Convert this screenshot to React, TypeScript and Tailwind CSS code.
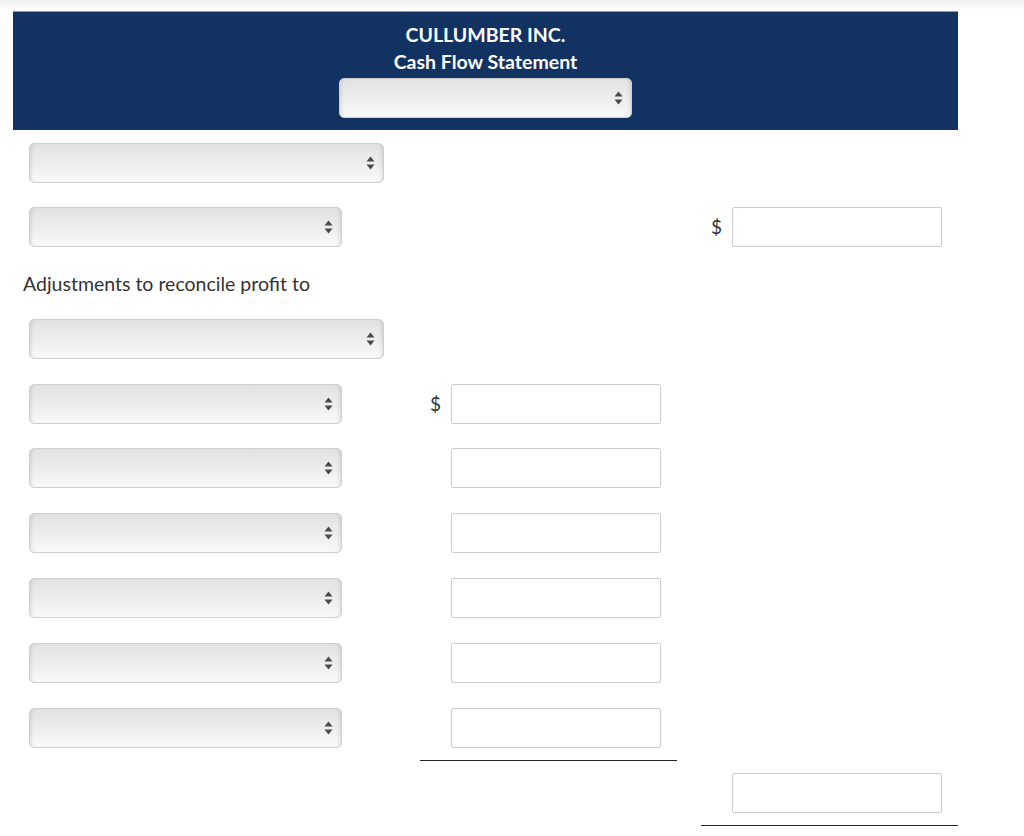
import React from "react";

const font = { fontFamily: "Lato, 'Noto Sans', sans-serif" };

function Arrows() {
  return (
    <svg width="9" height="14" viewBox="0 0 9 14" className="shrink-0">
      <path d="M4.5 0.5 L8.5 5.5 L0.5 5.5 Z" fill="#4a4a4a" />
      <path d="M4.5 13.5 L8.5 8.5 L0.5 8.5 Z" fill="#4a4a4a" />
    </svg>
  );
}

function Select({ w }: { w: string }) {
  return (
    <div
      className={`${w} h-[40px] flex items-center justify-end pr-[8px] rounded-[5px] border border-[#cfcfcf] bg-[linear-gradient(#e2e2e2,#efefef_60%,#fafafa)] shadow-[inset_4px_0_4px_-3px_rgba(0,0,0,0.12),inset_-4px_0_4px_-3px_rgba(0,0,0,0.12)]`}
    >
      <Arrows />
    </div>
  );
}

function Input() {
  return <div className="w-[210px] h-[40px] border border-[#cccccc] rounded-[2px] bg-white" />;
}

function Cell({ dollar, input }: { dollar?: boolean; input?: boolean }) {
  return (
    <div className="w-[257px] h-[40px] flex items-center justify-end pr-[16px] gap-[10px]">
      {dollar && <span className="text-[19px] text-[#333]">$</span>}
      {input && <Input />}
    </div>
  );
}

function Row({
  selW,
  mid,
  right,
}: {
  selW: string;
  mid?: { dollar?: boolean; input?: boolean };
  right?: { dollar?: boolean; input?: boolean };
}) {
  return (
    <div className="flex h-[40px]">
      <div className="w-[407px] pl-[16px]">
        <Select w={selW} />
      </div>
      <Cell {...(mid || {})} />
      <div className="w-[24px]" />
      <Cell {...(right || {})} />
    </div>
  );
}

export default function App() {
  return (
    <div
      className="min-h-[836px] bg-[linear-gradient(#efefef,#ffffff_10px)] pt-[11px] pl-[13px]"
      style={font}
    >
      <div className="w-[945px]">
        <div className="h-[119px] bg-[#123262] border-t border-[#8d9bb3] flex flex-col items-center pt-[10px]">
          <div className="text-white font-bold text-[19.5px] leading-[26px]">CULLUMBER INC.</div>
          <div className="text-white font-bold text-[19.5px] leading-[26px] mt-[1px]">Cash Flow Statement</div>
          <div className="mt-[3px]">
            <Select w="w-[293px]" />
          </div>
        </div>

        <div className="mt-[13px] flex flex-col">
          <Row selW="w-[355px]" />
          <div className="mt-[24px]">
            <Row selW="w-[313px]" right={{ dollar: true, input: true }} />
          </div>
          <div className="mt-[27px] pl-[10px] text-[19.5px] leading-[20px] text-[#333]">
            Adjustments to reconcile profit to
          </div>
          <div className="mt-[25px]">
            <Row selW="w-[355px]" />
          </div>
          <div className="mt-[25px]">
            <Row selW="w-[313px]" mid={{ dollar: true, input: true }} />
          </div>
          <div className="mt-[24px]">
            <Row selW="w-[313px]" mid={{ input: true }} />
          </div>
          <div className="mt-[25px]">
            <Row selW="w-[313px]" mid={{ input: true }} />
          </div>
          <div className="mt-[25px]">
            <Row selW="w-[313px]" mid={{ input: true }} />
          </div>
          <div className="mt-[25px]">
            <Row selW="w-[313px]" mid={{ input: true }} />
          </div>
          <div className="mt-[25px]">
            <Row selW="w-[313px]" mid={{ input: true }} />
          </div>
          <div className="mt-[12px] flex">
            <div className="w-[407px]" />
            <div className="w-[257px] border-t border-[#222]" />
          </div>
          <div className="mt-[12px] flex">
            <div className="w-[688px]" />
            <Cell input />
          </div>
          <div className="mt-[12px] flex">
            <div className="w-[688px]" />
            <div className="w-[257px] border-t border-[#222]" />
          </div>
        </div>
      </div>
    </div>
  );
}
